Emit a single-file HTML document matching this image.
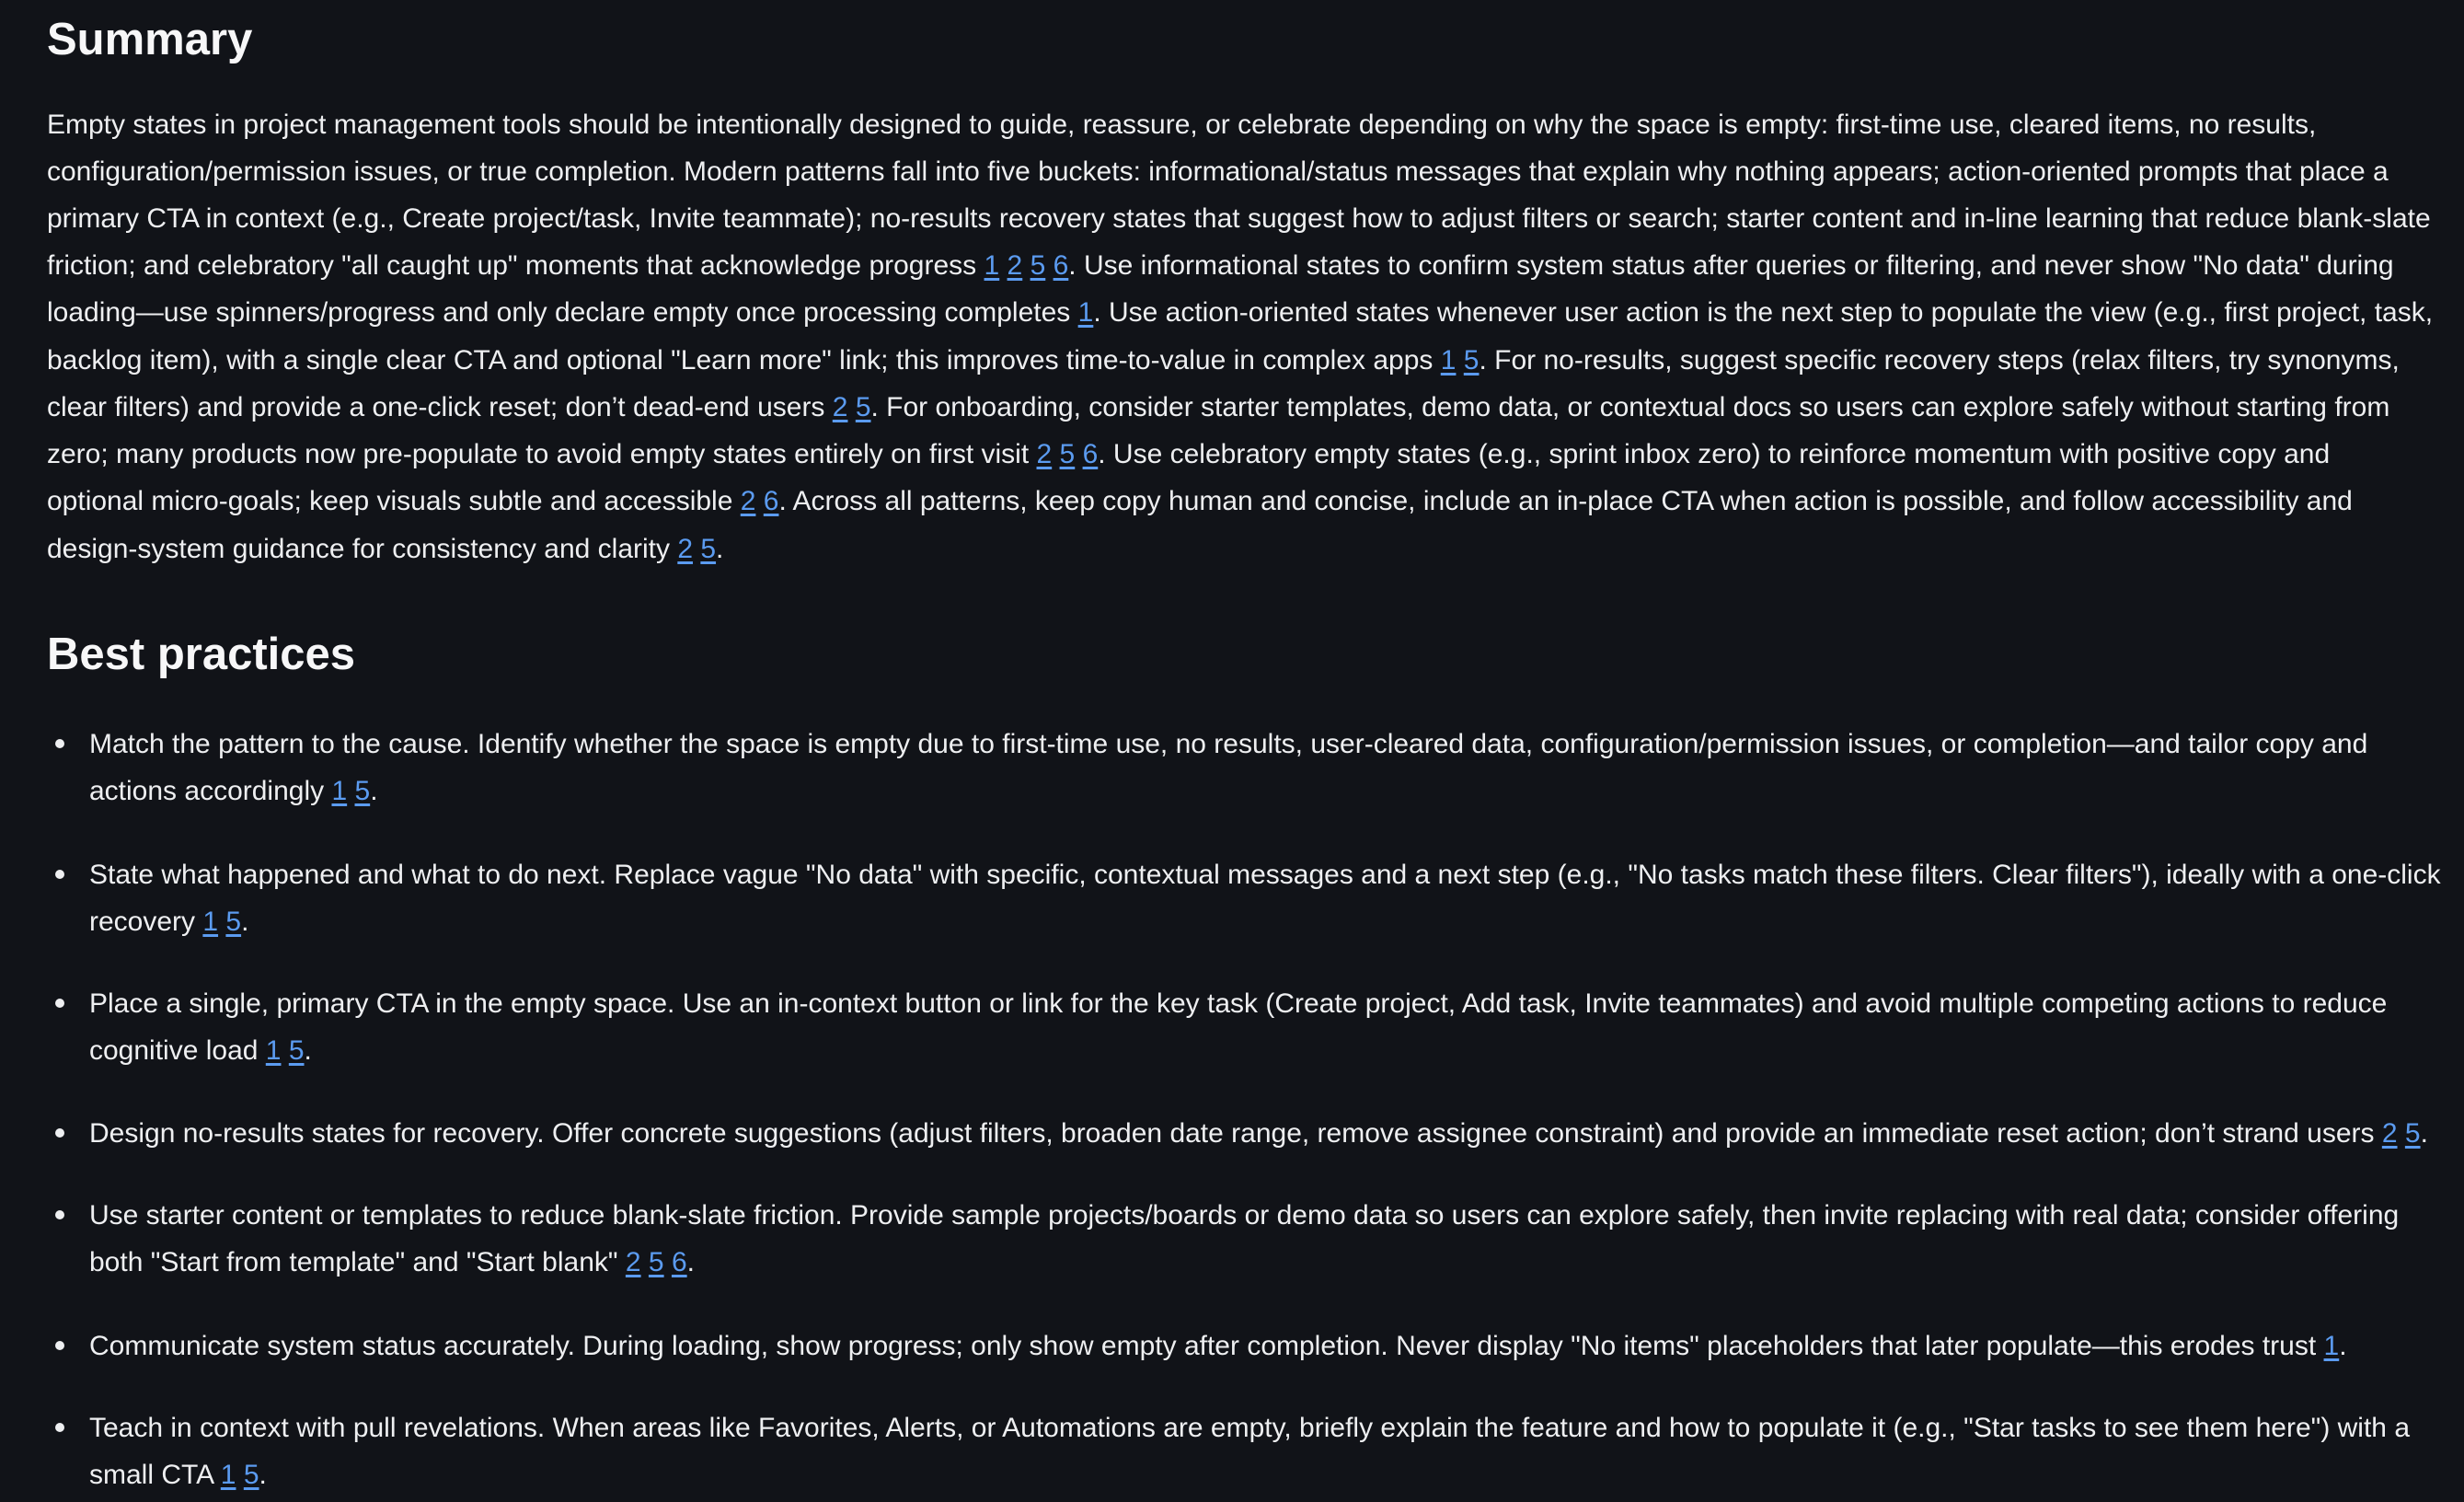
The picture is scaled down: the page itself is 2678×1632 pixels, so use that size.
<!DOCTYPE html>
<html><head><meta charset="utf-8">
<style>
html,body{margin:0;padding:0;background:#111318;}
body{width:2678px;height:1632px;position:relative;overflow:hidden;font-family:"Liberation Sans",sans-serif;color:#eeeff1;}
.h{position:absolute;left:51px;font-weight:bold;font-size:49px;line-height:70px;color:#f7f7f8;white-space:nowrap;}
.l{position:absolute;left:51px;font-size:30px;line-height:51px;height:51px;white-space:nowrap;}
.b{left:97px;}
.dot{position:absolute;left:60px;width:10px;height:10px;border-radius:50%;background:#eeeff1;}
a{color:#5b9bf0;text-decoration:underline;text-underline-offset:4px;}
</style></head><body>
<div class="h" style="top:8px">Summary</div>
<div class="l" style="top:109.5px">Empty states in project management tools should be intentionally designed to guide, reassure, or celebrate depending on why the space is empty: first-time use, cleared items, no results,</div>
<div class="l" style="top:160.7px">configuration/permission issues, or true completion. Modern patterns fall into five buckets: informational/status messages that explain why nothing appears; action-oriented prompts that place a</div>
<div class="l" style="top:212px">primary CTA in context (e.g., Create project/task, Invite teammate); no-results recovery states that suggest how to adjust filters or search; starter content and in-line learning that reduce blank-slate</div>
<div class="l" style="top:263px">friction; and celebratory "all caught up" moments that acknowledge progress <a>1</a> <a>2</a> <a>5</a> <a>6</a>. Use informational states to confirm system status after queries or filtering, and never show "No data" during</div>
<div class="l" style="top:314.4px">loading—use spinners/progress and only declare empty once processing completes <a>1</a>. Use action-oriented states whenever user action is the next step to populate the view (e.g., first project, task,</div>
<div class="l" style="top:365.6px">backlog item), with a single clear CTA and optional "Learn more" link; this improves time-to-value in complex apps <a>1</a> <a>5</a>. For no-results, suggest specific recovery steps (relax filters, try synonyms,</div>
<div class="l" style="top:417px">clear filters) and provide a one-click reset; don’t dead-end users <a>2</a> <a>5</a>. For onboarding, consider starter templates, demo data, or contextual docs so users can explore safely without starting from</div>
<div class="l" style="top:468px">zero; many products now pre-populate to avoid empty states entirely on first visit <a>2</a> <a>5</a> <a>6</a>. Use celebratory empty states (e.g., sprint inbox zero) to reinforce momentum with positive copy and</div>
<div class="l" style="top:519.4px">optional micro-goals; keep visuals subtle and accessible <a>2</a> <a>6</a>. Across all patterns, keep copy human and concise, include an in-place CTA when action is possible, and follow accessibility and</div>
<div class="l" style="top:570.6px">design-system guidance for consistency and clarity <a>2</a> <a>5</a>.</div>

<div class="h" style="top:676px">Best practices</div>

<div class="dot" style="top:803px"></div>
<div class="l b" style="top:782.5px">Match the pattern to the cause. Identify whether the space is empty due to first-time use, no results, user-cleared data, configuration/permission issues, or completion—and tailor copy and</div>
<div class="l b" style="top:833.7px">actions accordingly <a>1</a> <a>5</a>.</div>

<div class="dot" style="top:945px"></div>
<div class="l b" style="top:924.5px">State what happened and what to do next. Replace vague "No data" with specific, contextual messages and a next step (e.g., "No tasks match these filters. Clear filters"), ideally with a one-click</div>
<div class="l b" style="top:975.7px">recovery <a>1</a> <a>5</a>.</div>

<div class="dot" style="top:1085px"></div>
<div class="l b" style="top:1064.5px">Place a single, primary CTA in the empty space. Use an in-context button or link for the key task (Create project, Add task, Invite teammates) and avoid multiple competing actions to reduce</div>
<div class="l b" style="top:1115.7px">cognitive load <a>1</a> <a>5</a>.</div>

<div class="dot" style="top:1226px"></div>
<div class="l b" style="top:1205.5px">Design no-results states for recovery. Offer concrete suggestions (adjust filters, broaden date range, remove assignee constraint) and provide an immediate reset action; don’t strand users <a>2</a> <a>5</a>.</div>

<div class="dot" style="top:1315px"></div>
<div class="l b" style="top:1294.5px">Use starter content or templates to reduce blank-slate friction. Provide sample projects/boards or demo data so users can explore safely, then invite replacing with real data; consider offering</div>
<div class="l b" style="top:1345.7px">both "Start from template" and "Start blank" <a>2</a> <a>5</a> <a>6</a>.</div>

<div class="dot" style="top:1457px"></div>
<div class="l b" style="top:1436.5px">Communicate system status accurately. During loading, show progress; only show empty after completion. Never display "No items" placeholders that later populate—this erodes trust <a>1</a>.</div>

<div class="dot" style="top:1546px"></div>
<div class="l b" style="top:1525.5px">Teach in context with pull revelations. When areas like Favorites, Alerts, or Automations are empty, briefly explain the feature and how to populate it (e.g., "Star tasks to see them here") with a</div>
<div class="l b" style="top:1576.7px">small CTA <a>1</a> <a>5</a>.</div>
</body></html>
